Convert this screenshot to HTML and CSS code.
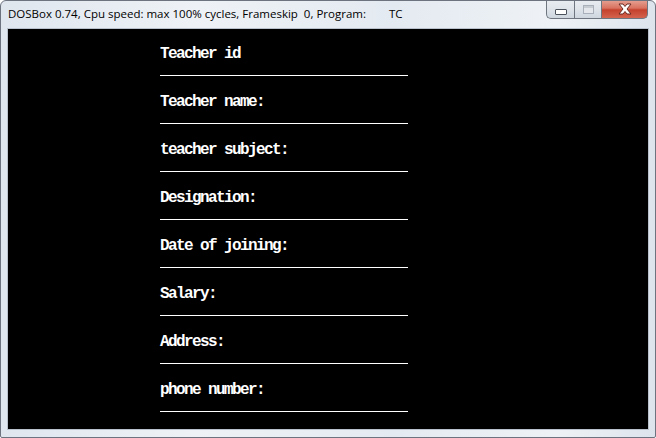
FILE: index.html
```html
<!DOCTYPE html>
<html>
<head>
<meta charset="utf-8">
<link rel="stylesheet" href="styles.css">
</head>
<body>
<div class="window">
  <div class="titlebar">
    <div class="title">DOSBox 0.74, Cpu speed: max 100% cycles, Frameskip  0, Program:<span class="prog">TC</span></div>
    <div class="controls">
      <div class="btn min"><span class="min-glyph"></span></div>
      <div class="btn max"><span class="max-glyph"></span></div>
      <div class="btn close">
        <svg width="18" height="12" viewBox="0 0 18 12">
          <path d="M3 1 L7 1 L9 3.5 L11 1 L15 1 L11 6 L15 11 L11 11 L9 8.5 L7 11 L3 11 L7 6 Z" fill="#fff" stroke="#6b2a22" stroke-width="1" stroke-linejoin="round"/>
        </svg>
      </div>
    </div>
  </div>
  <div class="body-row">
    <div class="screen">
      <div class="field"><div class="label">Teacher id</div><div class="cell"><div class="rule"></div></div></div>
      <div class="field"><div class="label">Teacher name:</div><div class="cell"><div class="rule"></div></div></div>
      <div class="field"><div class="label">teacher subject:</div><div class="cell"><div class="rule"></div></div></div>
      <div class="field"><div class="label">Designation:</div><div class="cell"><div class="rule"></div></div></div>
      <div class="field"><div class="label">Date of joining:</div><div class="cell"><div class="rule"></div></div></div>
      <div class="field"><div class="label">Salary:</div><div class="cell"><div class="rule"></div></div></div>
      <div class="field"><div class="label">Address:</div><div class="cell"><div class="rule"></div></div></div>
      <div class="field"><div class="label">phone number:</div><div class="cell"><div class="rule"></div></div></div>
    </div>
  </div>
</div>
</body>
</html>
```
FILE: styles.css
```css
html, body {
  margin: 0;
  padding: 0;
  background: #ffffff;
}
.window {
  width: 656px;
  height: 438px;
  box-sizing: border-box;
  border: 1px solid #6d7480;
  border-radius: 6px 6px 2px 2px;
  background: linear-gradient(90deg, #dfe6ee 0%, #eef2f6 30%, #e4eaf1 60%, #eef2f6 85%, #dde4ec 100%);
  display: flex;
  flex-direction: column;
  overflow: hidden;
}
.titlebar {
  height: 28px;
  display: flex;
  justify-content: space-between;
  align-items: flex-start;
}
.title {
  font-family: "Open Sans", "Liberation Sans", sans-serif;
  font-size: 11.5px;
  color: #000;
  white-space: pre;
  padding: 5px 0 0 7px;
  line-height: 16px;
}
.prog {
  margin-left: 23px;
}
.controls {
  display: flex;
  margin-right: 7px;
  margin-top: -1px;
}
.btn {
  height: 19px;
  box-sizing: border-box;
  border: 1px solid #6f7680;
  border-top: none;
  display: flex;
  align-items: center;
  justify-content: center;
}
.min {
  width: 28px;
  border-radius: 0 0 0 5px;
  border-right: none;
  background: linear-gradient(180deg, #e9edf2 0%, #dfe4ea 50%, #cfd6de 100%);
}
.max {
  width: 27px;
  border-right: none;
  background: linear-gradient(180deg, #e9edf2 0%, #dfe4ea 50%, #cfd6de 100%);
}
.close {
  width: 47px;
  border-radius: 0 0 5px 0;
  background: linear-gradient(180deg, #e6a395 0%, #d9725f 45%, #c4412d 55%, #d4644e 100%);
}
.min-glyph {
  display: block;
  width: 10px;
  height: 4px;
  margin-top: 5px;
  background: #fff;
  border: 1px solid #4b525c;
  border-radius: 1px;
}
.max-glyph {
  display: block;
  width: 9px;
  height: 7px;
  border: 1px solid #a9b0b9;
  background: #e4e8ec;
  box-shadow: inset 0 2px 0 #c7ccd3;
}
.body-row {
  flex: 1;
  display: flex;
  padding: 0 7px 8px 7px;
}
.screen {
  width: 640px;
  height: 400px;
  background: #000;
  box-sizing: border-box;
  padding: 16px 0 0 152px;
  display: flex;
  flex-direction: column;
  outline: 1px solid #b9c2cc;
}
.field {
  height: 48px;
  display: flex;
  flex-direction: column;
}
.label {
  height: 16px;
  line-height: 19px;
  font-family: "Liberation Mono", "DejaVu Sans Mono", monospace;
  font-size: 16px;
  font-weight: bold;
  letter-spacing: -1.6px;
  color: #ffffff;
  white-space: pre;
}
.cell {
  height: 16px;
  padding-top: 14px;
  box-sizing: border-box;
}
.rule {
  width: 248px;
  height: 1px;
  background: #ffffff;
}
```
